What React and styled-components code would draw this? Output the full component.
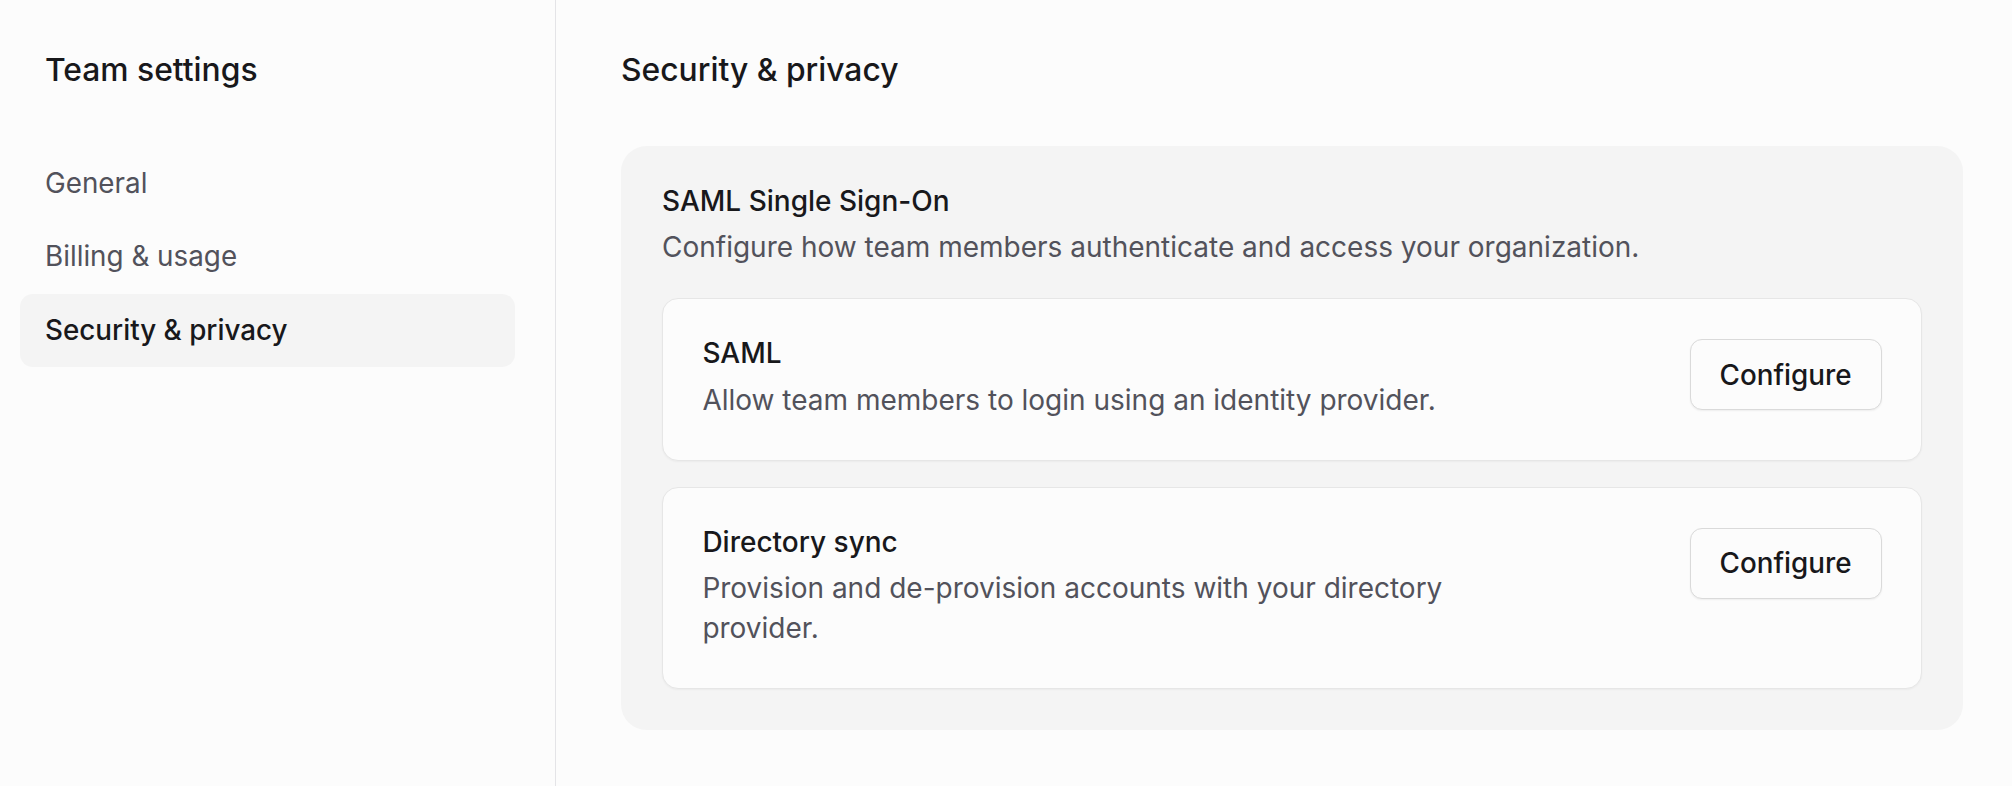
import React from "react";
import styled, { createGlobalStyle } from "styled-components";

const GlobalStyle = createGlobalStyle`
  html, body {
    margin: 0;
    padding: 0;
    background: #fcfcfc;
  }
  body {
    font-family: Inter, "Noto Sans", "Liberation Sans", sans-serif;
    color: #18181b;
    -webkit-font-smoothing: antialiased;
  }
  * { box-sizing: border-box; }
`;

const Page = styled.div`
  display: flex;
  min-height: 100vh;
  background: #fcfcfc;
`;

const Sidebar = styled.aside`
  flex: 0 0 556px;
  width: 556px;
  border-right: 1.6px solid #e4e4e7;
  padding: 50.4px 40px 0 20px;
`;

const Title = styled.h1`
  margin: 0;
  font-size: 31.8px;
  line-height: 40px;
  font-weight: 500;
  color: #18181b;
`;

const SidebarTitle = styled(Title)`
  padding-left: 25px;
  margin-bottom: 56.6px;
`;

const Nav = styled.nav`
  display: flex;
  flex-direction: column;
`;

const NavItem = styled.a`
  display: block;
  padding: 17.1px 25px;
  font-size: 27.8px;
  line-height: 39.2px;
  border-radius: 12.8px;
  text-decoration: none;
  cursor: pointer;
  font-weight: ${(p) => (p.$active ? 500 : 400)};
  color: ${(p) => (p.$active ? "#18181b" : "#52525b")};
  background: ${(p) => (p.$active ? "#f4f4f4" : "transparent")};
`;

const Main = styled.main`
  flex: 1;
  padding: 50.4px 49px 0 65px;
`;

const MainTitle = styled(Title)`
  margin-bottom: 55.6px;
`;

const Panel = styled.section`
  background: #f4f4f4;
  border-radius: 25.6px;
  padding: 41px;
`;

const SectionTitle = styled.h2`
  margin: 0;
  font-size: 28px;
  line-height: 28px;
  font-weight: 500;
  color: #18181b;
`;

const Description = styled.p`
  margin: 12.3px 0 0;
  font-size: 28px;
  line-height: 40px;
  font-weight: 400;
  color: #52525b;
  max-width: ${(p) => p.$max || "none"};
`;

const CardList = styled.div`
  display: flex;
  flex-direction: column;
  gap: 26.4px;
  margin-top: 31.2px;
`;

const Card = styled.div`
  display: flex;
  justify-content: space-between;
  align-items: flex-start;
  gap: 40px;
  background: #fcfcfc;
  border: 1.6px solid #e6e6e6;
  border-radius: 16px;
  padding: 40px 39.4px;
  box-shadow: 0 1px 2px rgba(0, 0, 0, 0.04);
`;

const CardText = styled.div`
  display: flex;
  flex-direction: column;
`;

const Button = styled.button`
  flex-shrink: 0;
  height: 70.4px;
  padding: 0 29px;
  font-family: inherit;
  font-size: 27.8px;
  font-weight: 500;
  color: #18181b;
  background: #fcfcfc;
  border: 1.6px solid #dadada;
  border-radius: 12px;
  box-shadow: 0 1px 2px rgba(0, 0, 0, 0.06);
  cursor: pointer;
`;

const navItems = [
  { label: "General" },
  { label: "Billing & usage" },
  { label: "Security & privacy", active: true },
];

const cards = [
  {
    title: "SAML",
    description: "Allow team members to login using an identity provider.",
  },
  {
    title: "Directory sync",
    description:
      "Provision and de-provision accounts with your directory provider.",
  },
];

export default function App() {
  return (
    <>
      <GlobalStyle />
      <Page>
        <Sidebar>
          <SidebarTitle>Team settings</SidebarTitle>
          <Nav>
            {navItems.map((item) => (
              <NavItem key={item.label} $active={item.active}>
                {item.label}
              </NavItem>
            ))}
          </Nav>
        </Sidebar>
        <Main>
          <MainTitle>Security &amp; privacy</MainTitle>
          <Panel>
            <SectionTitle>SAML Single Sign-On</SectionTitle>
            <Description>
              Configure how team members authenticate and access your
              organization.
            </Description>
            <CardList>
              {cards.map((c) => (
                <Card key={c.title}>
                  <CardText>
                    <SectionTitle>{c.title}</SectionTitle>
                    <Description $max="800px">{c.description}</Description>
                  </CardText>
                  <Button>Configure</Button>
                </Card>
              ))}
            </CardList>
          </Panel>
        </Main>
      </Page>
    </>
  );
}
